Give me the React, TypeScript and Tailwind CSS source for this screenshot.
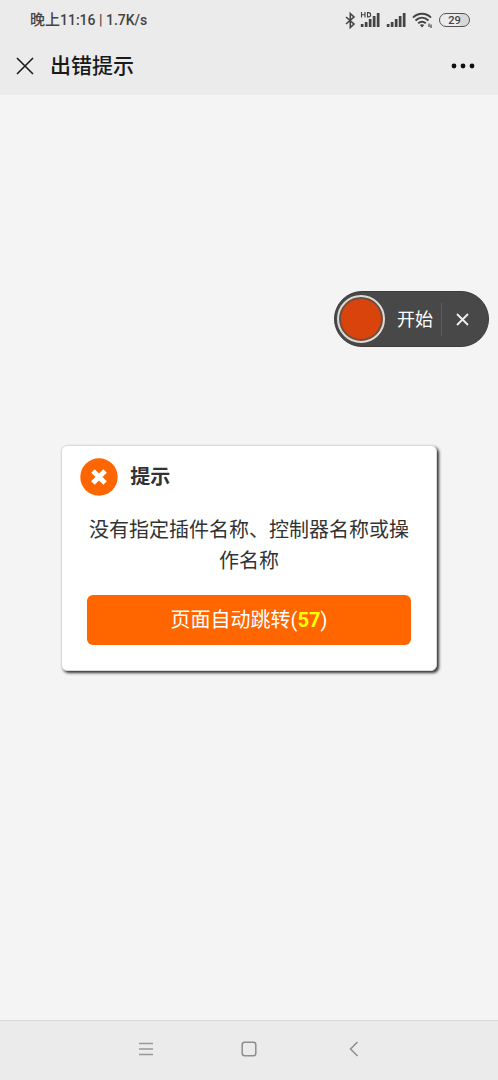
import { useState } from "react";

const signalBars = [3, 5, 8, 11, 14];

const Signal = ({ hd = false }: { hd?: boolean }) => (
  <svg width="20" height="18" viewBox="0 0 20 18" fill="#444444" aria-hidden="true">
    {hd && (
      <path
        d="M1.500 1v5.500M5 1v5.500M1.500 3.700h3.500M7.500 1.600h1a2.100 2.100 0 0 1 0 4.300h-1z"
        fill="none"
        stroke="#444444"
        strokeWidth="1.1"
      />
    )}
    {signalBars.map((h, i) => (
      <rect key={h} x={0.8 + i * 4} y={16 - h} width="2.7" height={h} />
    ))}
  </svg>
);

const StatusBar = () => (
  <div className="flex h-10 items-center justify-between pr-7 pl-[30px] text-[#444444]">
    <span className="pt-px text-[15px] font-medium">
      晚上<span className="text-sm">11:16 | 1.7K/s</span>
    </span>
    <div className="flex items-center">
      <svg width="11" height="18" viewBox="0 0 11 18" fill="none" stroke="#444444" strokeWidth="1.6" aria-hidden="true">
        <path d="M1 6l8 7-3.700 3.500V2.500L9 6L1 13" />
      </svg>
      <div className="ml-1 flex gap-[6px]">
        <Signal hd />
        <Signal />
      </div>
      <svg className="ml-[6px]" width="21" height="18" viewBox="0 0 21 18" fill="none" stroke="#444444" strokeWidth="1.900" aria-hidden="true">
        <path d="M1 6.700C6 1.500 14 1.500 19 6.700M3.500 9.500C7.500 5.700 12.500 5.700 16.500 9.500M6.200 12.300C8.500 10.300 11.500 10.300 13.800 12.300" />
        <path d="M7.800 14Q10 12.400 12.200 14L10 16.500z" fill="#444444" stroke="none" />
        <path d="M17 12.500v3.500M19 13.500v3.500" strokeWidth="1.200" />
      </svg>
      <div className="ml-[6px] flex h-[14px] w-[31px] items-center justify-center rounded-full border border-[#555555] bg-linear-to-r from-[#ebebeb] from-70% to-[#d8d8d8] to-70% text-[11px] leading-none font-medium">
        29
      </div>
    </div>
  </div>
);

const RecorderWidget = ({ onClose }: { onClose: () => void }) => (
  <div className="absolute top-[196px] right-[9px] flex h-14 w-[155px] items-center rounded-full border border-[#3b3b3b] bg-[#484848] pl-[2px] text-white">
    <button type="button" className="flex flex-1 items-center gap-3 text-lg">
      <span className="size-12 rounded-full border-2 border-[#dedad4] bg-[#d9430c] shadow-[inset_0_0_0_2px_#665047]" />
      <span className="pt-[2px]">开始</span>
    </button>
    <button
      type="button"
      aria-label="关闭"
      className="flex h-[33px] w-[47px] items-center border-l border-[#5e5e5e] pl-[14px]"
      onClick={onClose}
    >
      <svg width="13" height="13" viewBox="0 0 13 13" fill="none" stroke="#f0f0f0" strokeWidth="1.800">
        <path d="M1 1l11 11M12 1L1 12" />
      </svg>
    </button>
  </div>
);

const NavBar = () => (
  <nav className="flex h-[60px] items-center justify-center gap-[86px] border-t border-[#d8d8d8] bg-[#ebebeb] pb-1">
    <button type="button" aria-label="菜单">
      <svg width="18" height="18" viewBox="0 0 18 18" fill="none" stroke="#999999" strokeWidth="1.500">
        <path d="M3 3.500h14M3 9h14M3 14.500h14" />
      </svg>
    </button>
    <button type="button" aria-label="主页">
      <svg width="18" height="18" viewBox="0 0 18 18" fill="none" stroke="#8e8e8e" strokeWidth="1.500">
        <rect x="2.200" y="2.200" width="13.600" height="13.600" rx="2.500" />
      </svg>
    </button>
    <button type="button" aria-label="返回">
      <svg width="18" height="18" viewBox="0 0 18 18" fill="none" stroke="#8e8e8e" strokeWidth="1.500">
        <path d="M13.500 2L6.500 9l7 7" />
      </svg>
    </button>
  </nav>
);

const App = () => {
  const [showRecorder, setShowRecorder] = useState(true);
  const [seconds] = useState(57);

  return (
    <div className="flex min-h-screen flex-col bg-[#f4f4f4] font-['Roboto','Noto_Sans_CJK_SC',sans-serif]">
      <header className="bg-[#ebebeb] pb-[3px]">
        <StatusBar />
        <div className="flex h-[52px] items-center pr-[22px] pl-4">
          <button type="button" aria-label="关闭">
            <svg width="18" height="18" viewBox="0 0 18 18" fill="none" stroke="#1a1a1a" strokeWidth="1.600">
              <path d="M1 1l16 16M17 1L1 17" />
            </svg>
          </button>
          <h1 className="ml-4 flex-1 pt-[2px] text-[21px] font-medium text-[#1a1a1a]">出错提示</h1>
          <button type="button" aria-label="更多">
            <svg width="26" height="6" viewBox="0 0 26 6" fill="#0f0f0f">
              <circle cx="4" cy="3" r="2.400" />
              <circle cx="13" cy="3" r="2.400" />
              <circle cx="22" cy="3" r="2.400" />
            </svg>
          </button>
        </div>
      </header>

      <main className="relative flex flex-1 items-center justify-center">
        {showRecorder && <RecorderWidget onClose={() => setShowRecorder(false)} />}

        <section className="w-[calc(75%+2px)] rounded-md border border-[#d9d9d9] bg-white pt-3 pb-[25px] text-xl text-[#333333] shadow-[2px_2px_3px_#333333]">
          <div className="flex items-center gap-3 px-[18px]">
            <svg width="38" height="38" viewBox="0 0 38 38" aria-hidden="true">
              <circle cx="19" cy="19" r="18.700" fill="#ff6600" />
              <path d="M14.700 14.700l8.600 8.600M23.300 14.700l-8.600 8.600" stroke="#ffffff" strokeWidth="5" strokeLinecap="square" strokeLinejoin="round" />
            </svg>
            <h2 className="font-bold">提示</h2>
          </div>
          <div className="px-[25px]">
            <p className="mt-[19px] text-center leading-[31px]">没有指定插件名称、控制器名称或操作名称</p>
            <a
              href="#"
              className="mt-[18px] flex h-[50px] items-center justify-center rounded-md bg-[#ff6600] text-white"
            >
              页面自动跳转(<b className="text-[#ffff00]">{seconds}</b>)
            </a>
          </div>
        </section>
      </main>

      <NavBar />
    </div>
  );
};

export default App;
